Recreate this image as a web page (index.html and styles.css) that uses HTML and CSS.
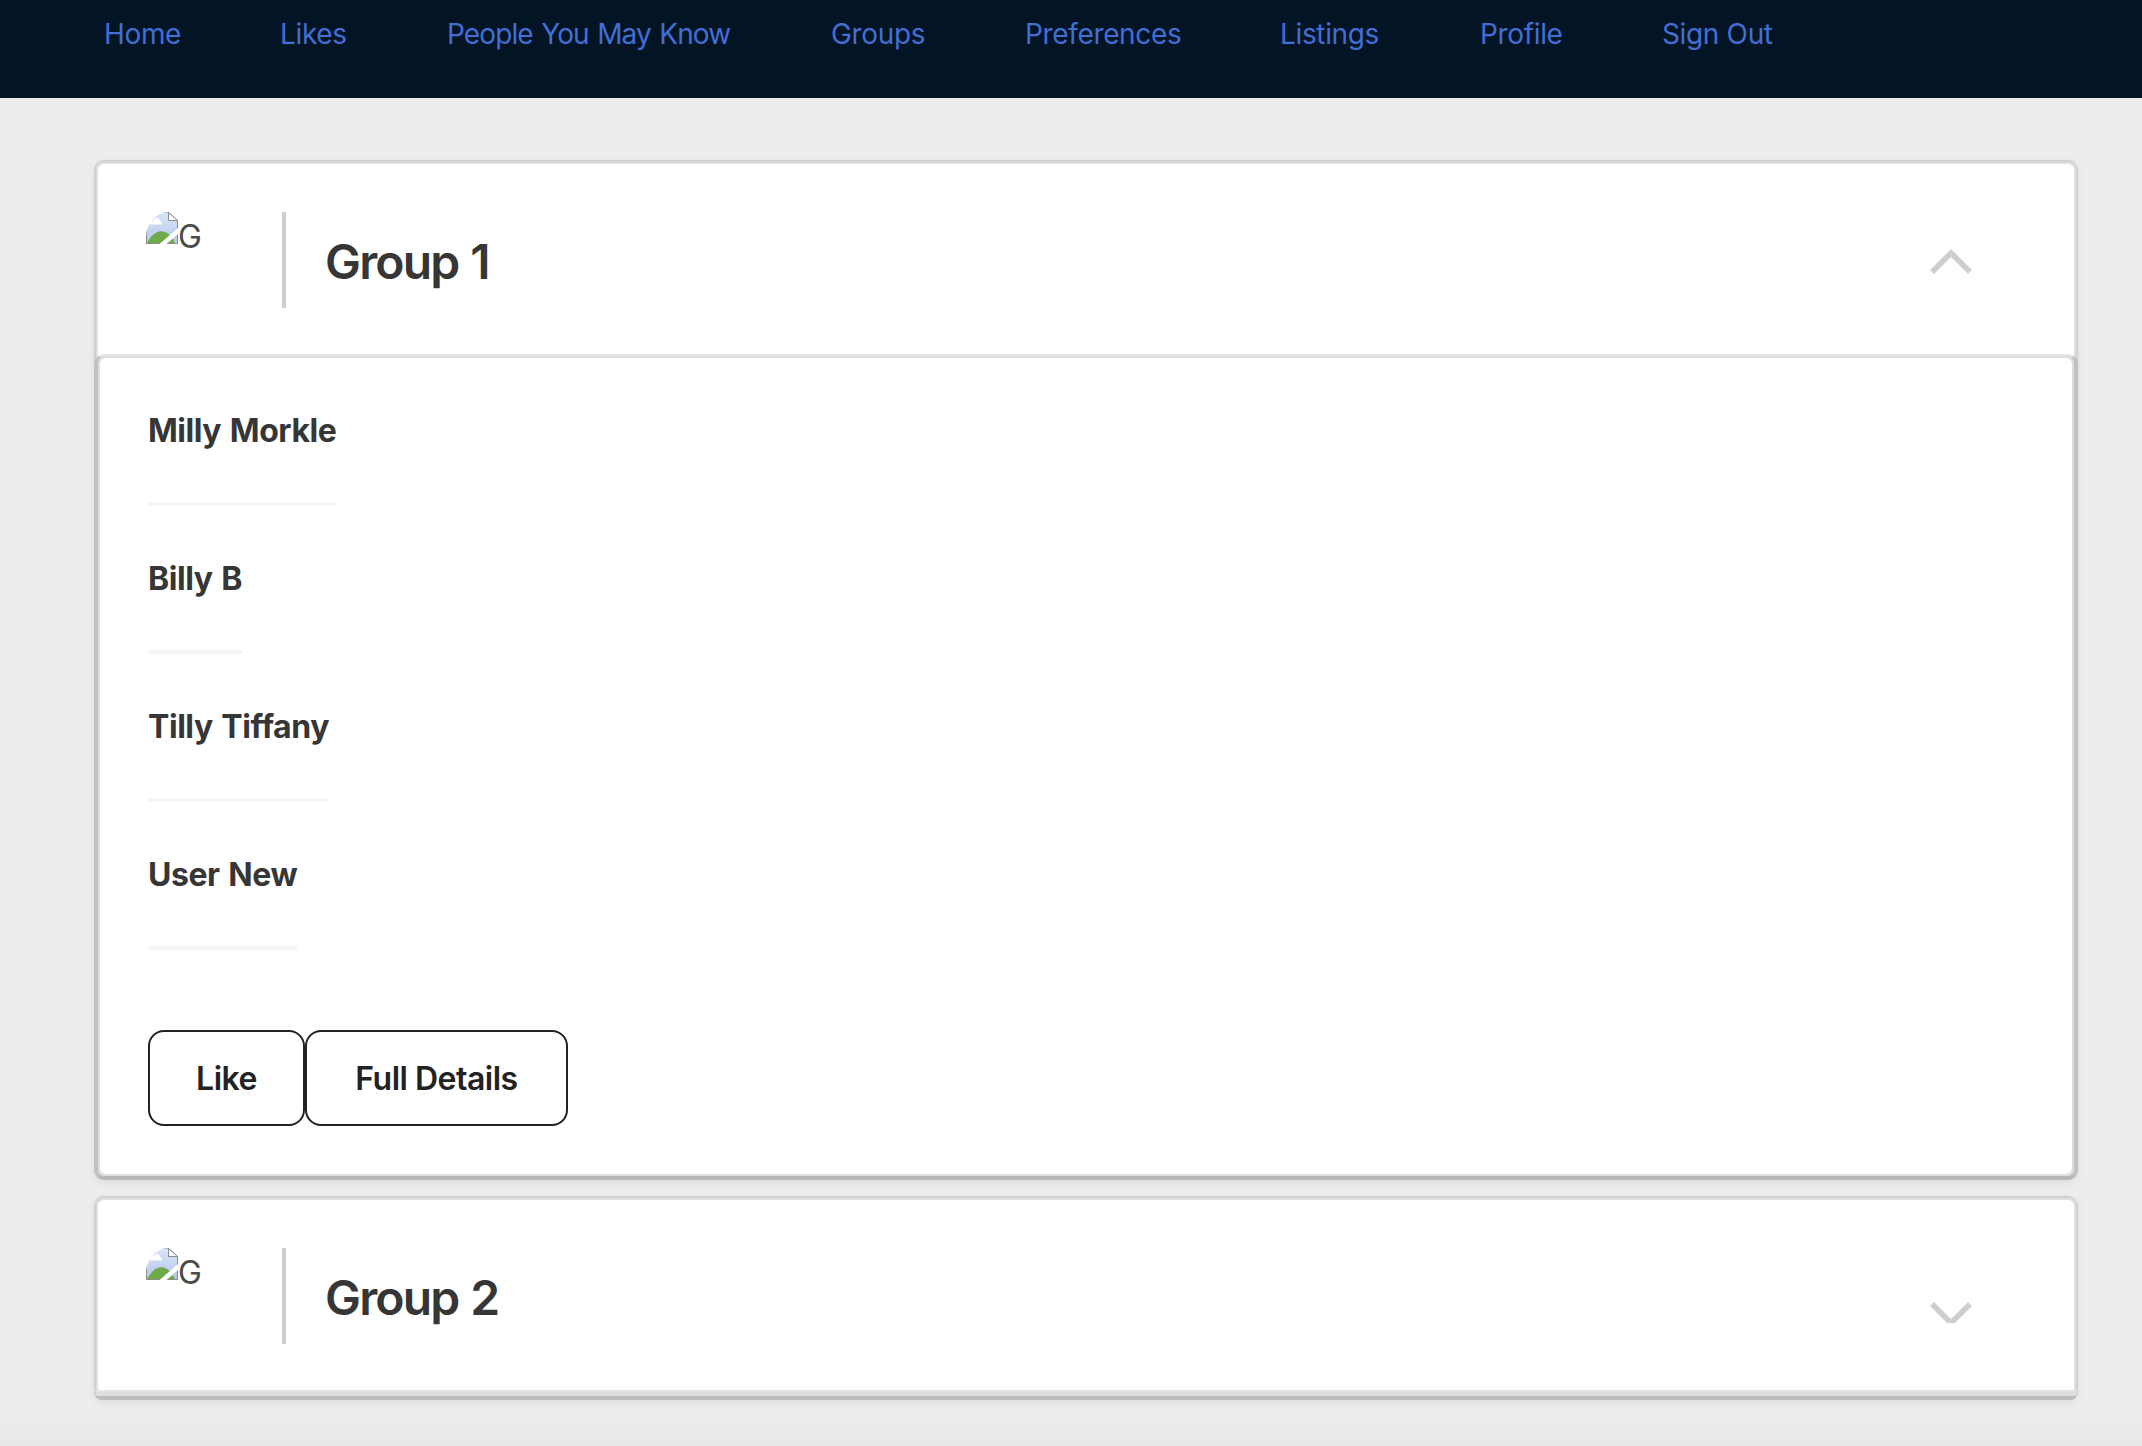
FILE: index.html
```html
<!DOCTYPE html>
<html lang="en">
<head>
<meta charset="utf-8">
<title>Groups</title>
<link rel="stylesheet" href="styles.css">
</head>
<body>
<svg width="0" height="0" class="defs" aria-hidden="true">
  <defs>
    <linearGradient id="sky" x1="0" y1="0" x2="0" y2="1"><stop offset="0" stop-color="#d9e5fb"/><stop offset="1" stop-color="#b5c6ea"/></linearGradient>
    <clipPath id="oval"><path d="M0 32V24C1 11 9 2 20 0H32V32Z"/></clipPath>
    <symbol id="broken" viewBox="0 0 32 32">
      <g clip-path="url(#oval)">
        <path d="M.5 0H22L31.500 8.500V31.500H.5Z" fill="url(#sky)" stroke="#8b8b8b"/>
        <path d="M4 12.500C3.500 9 6 8 7.500 8.500C8.500 5 14 5.500 14 9C16 9.500 16.500 12.500 15 12.500Z" fill="#fff"/>
        <path d="M1 31C9 16 21 15 29 31Z" fill="#6dab4a"/>
        <path d="M22.500 .5V8.500H31.500Z" fill="#fff" stroke="#8b8b8b"/>
        <path d="M13.500 32L32 16V22L20.500 32Z" fill="#fff"/>
      </g>
    </symbol>
  </defs>
</svg>
<nav class="nav">
  <a>Home</a><a>Likes</a><a class="long">People You May Know</a><a>Groups</a><a>Preferences</a><a>Listings</a><a>Profile</a><a>Sign Out</a>
</nav>
<main class="groups">
  <section class="card">
    <header class="head">
      <div class="avatar"><svg class="broken" width="32" height="32"><use href="#broken"/></svg><span>G</span></div>
      <h2 class="title">Group 1</h2>
      <svg class="chevron" width="42" height="26" viewBox="0 0 42 26"><path d="M2 23L21 4L40 23"/></svg>
    </header>
    <div class="frame">
      <div class="panel">
        <div class="body">
          <h3 class="name">Milly Morkle</h3>
          <h3 class="name">Billy B</h3>
          <h3 class="name">Tilly Tiffany</h3>
          <h3 class="name">User New</h3>
          <div class="actions"><button class="btn like">Like</button><button class="btn details">Full Details</button></div>
        </div>
      </div>
    </div>
  </section>
  <section class="card">
    <header class="head">
      <div class="avatar"><svg class="broken" width="32" height="32"><use href="#broken"/></svg><span>G</span></div>
      <h2 class="title">Group 2</h2>
      <svg class="chevron down" width="42" height="21" viewBox="0 0 42 21"><path d="M2 2L21 21L40 2"/></svg>
    </header>
    <div class="frame closed"><div class="panel"></div></div>
  </section>
</main>
</body>
</html>
```
FILE: styles.css
```css
* { box-sizing: border-box; }
body {
  margin: 0;
  height: 1446px;
  overflow: hidden;
  background: linear-gradient(#ededed 1410px, #e8e8e8 1446px);
  font-family: Inter, "Liberation Sans", sans-serif;
  color: #363636;
}
.defs { display: block; height: 0; }
.nav {
  display: grid;
  grid-template-columns: 176px 167px 384px 194px 255px 200px 182px auto;
  height: 98px;
  padding: 17px 0 0 104px;
  background: #031425;
  color: #416fd6;
  font-size: 28px;
  line-height: 34px;
  letter-spacing: -.35px;
  white-space: nowrap;
}
.nav .long { letter-spacing: -.9px; word-spacing: 1.5px; }
.groups {
  display: flex;
  flex-direction: column;
  gap: 16px;
  padding: 62px 64px 0 94px;
}
.card {
  border: 2px solid #d1d1d1;
  border-bottom: 0;
  border-radius: 10px;
  background: #fff;
  box-shadow: inset 0 0 0 2px #dfdfdf, 0 3px 8px rgba(0, 0, 0, .07);
}
.head {
  display: flex;
  height: 192px;
  padding: 50px 104px 46px 50px;
}
.avatar {
  display: flex;
  width: 140px;
  height: 96px;
  border-right: 4px solid #cecece;
  color: #4a4a4a;
  font-size: 32px;
  line-height: 50px;
}
.title {
  margin: 0 auto 0 39px;
  font-size: 48px;
  font-weight: 600;
  line-height: 99px;
  letter-spacing: -1.8px;
  word-spacing: 1.5px;
}
.chevron { margin-top: 37px; }
.chevron.down { margin-top: 54px; }
.chevron path { fill: none; stroke: #cecece; stroke-width: 5.6; }
.frame {
  margin: 0 -2px;
  border: solid;
  border-width: 2px 4px 4px;
  border-color: #e5e5e5 #c1c1c1 #b7b7b7;
  border-radius: 10px;
  background: #dedede;
}
.frame.closed {
  border-width: 2px 2px 4px;
  border-color: #e3e3e3 #d1d1d1 #bcbcbc;
  border-radius: 0 0 8px 8px;
}
.panel {
  border: 2px solid #dedede;
  border-radius: 8px;
  background: #fff;
}
.body {
  display: flex;
  flex-direction: column;
  align-items: flex-start;
  padding: 0 48px 48px;
}
.name {
  height: 148px;
  margin: 0;
  padding-top: 49px;
  border-bottom: 4px solid #f5f5f5;
  font-size: 32px;
  font-weight: 700;
  line-height: 48px;
  letter-spacing: -.45px;
  word-spacing: 1.5px;
}
.actions { display: flex; margin-top: 80px; }
.btn {
  height: 96px;
  padding: 0;
  border: 2px solid #222;
  border-radius: 16px;
  background: #fff;
  color: #222;
  font: 600 32px Inter, "Liberation Sans", sans-serif;
  letter-spacing: -.5px;
}
.like { width: 157px; }
.details { width: 263px; }
```
